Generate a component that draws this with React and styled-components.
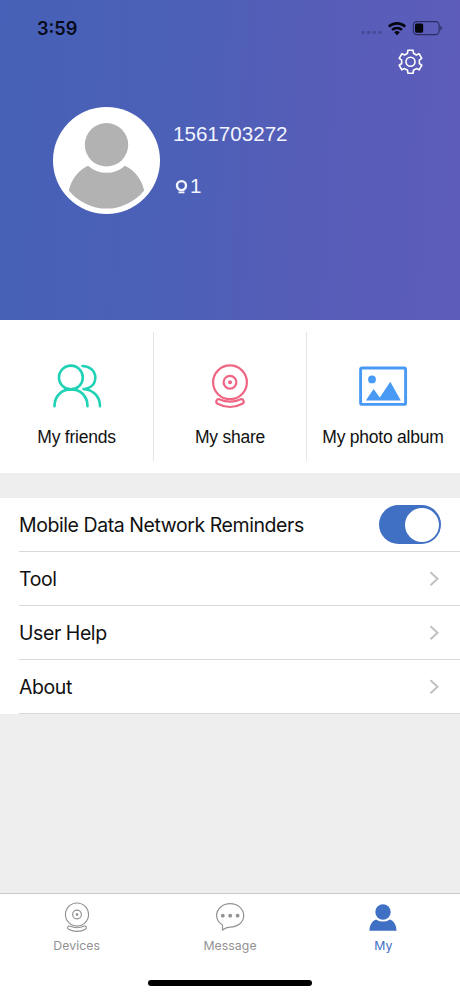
import React, { useState } from "react";
import styled, { createGlobalStyle } from "styled-components";

const GlobalStyle = createGlobalStyle`
    * {
        box-sizing: border-box;
    }
    body {
        margin: 0;
        background: #eeeeee;
    }
`;

const Screen = styled.div`
    display: flex;
    flex-direction: column;
    width: 460px;
    height: 996px;
    background: #eeeeee;
    color: #111111;
    font-family: Inter, "Liberation Sans", sans-serif;
    overflow: hidden;
`;
const Header = styled.header`
    height: 320px;
    background: linear-gradient(93deg, #4661b7 0%, #4c60b7 38%, #555db7 65%, #5e5cbb 100%);
`;
const StatusBar = styled.div`
    display: flex;
    justify-content: space-between;
    height: 48px;
    padding: 0 17px 0 37px;
`;
const Time = styled.span`
    padding-top: 16px;
    font-size: 18.2px;
    line-height: 24px;
    font-weight: 600;
    color: #070b1c;
`;
const StatusIcons = styled.div`
    padding-top: 18px;
    svg {
        display: block;
    }
`;
const SettingsRow = styled.div`
    display: flex;
    justify-content: flex-end;
    height: 59px;
    padding-right: 36px;
`;
const IconButton = styled.button`
    width: 28px;
    height: 28px;
    padding: 0;
    border: 0;
    background: none;
    cursor: pointer;
    svg {
        display: block;
    }
`;
const Profile = styled.div`
    display: flex;
    gap: 13px;
    padding-left: 53px;
`;
const ProfileInfo = styled.div`
    display: flex;
    flex-direction: column;
    gap: 28px;
    padding-top: 15px;
    font-family: "Liberation Sans", Arial, sans-serif;
    font-size: 20.6px;
    line-height: 24px;
    color: #f2f4ff;
`;
const DeviceCount = styled.div`
    display: flex;
    align-items: center;
    gap: 2px;
    padding-left: 2px;
`;

const Tiles = styled.section`
    display: grid;
    grid-template-columns: repeat(3, 153px);
    height: 153px;
    padding: 12px 0;
    background: #ffffff;
`;
const Tile = styled.div`
    display: flex;
    flex-direction: column;
    align-items: center;
    gap: 16px;
    padding-top: 28px;
    font-family: "Liberation Sans", Arial, sans-serif;
    font-size: 17.5px;
    line-height: 22px;
    letter-spacing: -0.23px;
    white-space: nowrap;
    border-left: ${props => (props.$first ? "0" : "1px solid #e6e6e6")};
    svg {
        display: block;
    }
`;

const List = styled.section`
    margin-top: 25px;
    background: #ffffff;
`;
const Row = styled.div`
    display: flex;
    align-items: center;
    justify-content: space-between;
    height: 54px;
    margin-left: 19px;
    padding-right: ${props => (props.$toggle ? "19px" : "20px")};
    font-size: 19.5px;
    letter-spacing: -0.43px;
    border-bottom: 1px solid #d8d8d8;
`;
const Switch = styled.button`
    display: flex;
    justify-content: ${props => (props.$on ? "flex-end" : "flex-start")};
    align-items: center;
    width: 62px;
    height: 39px;
    padding: 0 2px;
    border: 0;
    border-radius: 20px;
    background: ${props => (props.$on ? "#4070c4" : "#e5e5ea")};
    cursor: pointer;
`;
const Knob = styled.span`
    width: 34px;
    height: 34px;
    border-radius: 50%;
    background: #ffffff;
`;

const TabBar = styled.nav`
    display: grid;
    grid-template-columns: repeat(3, 1fr);
    height: 87px;
    margin-top: auto;
    padding-top: 8px;
    background: #ffffff;
    border-top: 1px solid #c9c9c9;
`;
const Tab = styled.div`
    display: flex;
    flex-direction: column;
    align-items: center;
    gap: 4px;
    font-size: 12.3px;
    line-height: 16px;
    letter-spacing: 0.05px;
    color: ${props => (props.$active ? "#4070c4" : "#929292")};
    svg {
        display: block;
    }
`;
const HomeArea = styled.div`
    display: flex;
    justify-content: center;
    height: 16px;
    background: #ffffff;
`;
const HomeIndicator = styled.div`
    width: 164px;
    height: 6px;
    border-radius: 3px;
    background: #000000;
`;

const SystemIcons = () => (
    <svg width="83" height="20" viewBox="0 0 83 20">
        <g fill="#474c98">
            <rect x="1.2" y="13" width="3.6" height="3" rx="1.2" />
            <rect x="6.9" y="13" width="3.6" height="3" rx="1.2" />
            <rect x="12.5" y="13" width="3.6" height="3" rx="1.2" />
            <rect x="18.2" y="13" width="3.6" height="3" rx="1.2" />
        </g>
        <g fill="none" stroke="#05060f" strokeWidth="2.6">
            <path d="M28.8 8.6a12 12 0 0 1 16.4 0" />
            <path d="M32 11.9a7.4 7.4 0 0 1 10 0" />
        </g>
        <path d="M34.2 14.2a4.2 4.2 0 0 1 5.6 0L37 17.2z" fill="#05060f" />
        <rect x="53.3" y="3.6" width="25.8" height="13" rx="3.6" fill="none" stroke="#2b2d63" strokeWidth="1.1" />
        <rect x="55" y="5.5" width="8.2" height="9.2" rx="1.6" fill="#05060f" />
        <path d="M80.4 7.8q1.6.6 1.6 2.3t-1.6 2.3z" fill="#2b2d63" />
    </svg>
);

// six teeth, each one given by [radius, angle from the tooth axis]
const tooth = [[9, -19], [11.8, -13], [11.8, 13], [9, 19]];
const gearPoints = [0, 60, 120, 180, 240, 300].flatMap((turn) =>
    tooth.map(([r, a]) => {
        const angle = ((turn + a - 90) * Math.PI) / 180;
        return `${(14.5 + r * Math.cos(angle)).toFixed(2)},${(13.8 + r * Math.sin(angle)).toFixed(2)}`;
    })
).join(" ");

const GearIcon = () => (
    <svg width="28" height="28" viewBox="0 0 28 28" fill="none" stroke="#ffffff" strokeWidth="1.6" strokeLinejoin="round">
        <polygon points={gearPoints} />
        <circle cx="14.5" cy="13.8" r="4.5" />
    </svg>
);

const Avatar = () => (
    <svg width="107" height="107" viewBox="0 0 107 107">
        <circle cx="53.5" cy="53.5" r="53.5" fill="#ffffff" />
        <circle cx="53.5" cy="37.8" r="21.7" fill="#b2b2b2" />
        <path d="M35 58.7A27.6 27.6 0 0 0 72 58.7C82 63.5 88.5 72 91.2 83.5A48.3 48.3 0 0 1 15.8 83.5C18.5 72 25 63.5 35 58.7z" fill="#b2b2b2" />
    </svg>
);

const BulbIcon = () => (
    <svg width="13" height="16" viewBox="0 0 13 16" fill="none" stroke="#f2f4ff">
        <circle cx="6.5" cy="7.6" r="4.5" strokeWidth="2.4" />
        <path d="M3.5 14.4h6" strokeWidth="1.8" />
    </svg>
);

const FriendsIcon = () => (
    <svg width="50" height="50" viewBox="0 0 50 50" fill="none" stroke="#1fd2b5" strokeWidth="2.6" strokeLinecap="round">
        <circle cx="18.9" cy="17.5" r="11.9" />
        <path d="M2.5 46.3C2.5 36 9.5 29.4 19 29.4S35.5 36 35.5 46.3" />
        <path d="M30.5 6C37.5 6 43.3 11 43.3 17.7S38 29 30.5 29C41 29.5 48 36 48 46.3" />
    </svg>
);

const CameraIcon = ({ size, viewBox, stroke, color }) => (
    <svg width={size} height={size} viewBox={viewBox} fill="none" stroke={color} strokeWidth={stroke}>
        <circle cx="25" cy="22.3" r="16.9" />
        <circle cx="25" cy="22.3" r="6.4" />
        <circle cx="25" cy="22.3" r="2" fill={color} stroke="none" />
        <path d="M14.3 39.2Q25 44 35.7 39.2C38.6 38.8 39.9 42.2 37.3 43.8Q31.5 47 25 47T12.7 43.8C10.1 42.2 11.4 38.8 14.3 39.2z" strokeLinejoin="round" />
    </svg>
);

const AlbumIcon = () => (
    <svg width="50" height="50" viewBox="0 0 50 50">
        <rect x="2.6" y="8" width="45" height="36.4" rx="1.5" fill="none" stroke="#489af5" strokeWidth="2.9" />
        <circle cx="14" cy="19.4" r="3.9" fill="#489af5" />
        <path d="M7.8 40.5l7.8-11.5 6.2 8.6 10.5-15.8 10.5 18.7z" fill="#489af5" />
    </svg>
);

const ChevronIcon = () => (
    <svg width="11" height="16" viewBox="0 0 11 16" fill="none" stroke="#c1c1c4" strokeWidth="2">
        <path d="M1.5 1.2l7 6.5-7 6.5" />
    </svg>
);

const MessageIcon = () => (
    <svg width="32" height="32" viewBox="0 1.3 32 32">
        <path d="M8.5 29.3V24.2C4.6 22 2.6 18.6 2.6 14.9 2.6 8.3 8.6 3 16.2 3S29.7 8.3 29.7 14.9C29.7 21.5 24 26.4 16.2 26.4 13 26.4 11 27.2 8.5 29.3z" fill="none" stroke="#929292" strokeWidth="1.2" strokeLinejoin="round" />
        <g fill="#929292">
            <circle cx="8.8" cy="15" r="1.9" />
            <circle cx="16.2" cy="15" r="1.9" />
            <circle cx="23.6" cy="15" r="1.9" />
        </g>
    </svg>
);

const PersonIcon = () => (
    <svg width="32" height="32" viewBox="0 0 32 32" fill="#4070c4">
        <circle cx="16" cy="10" r="7.7" />
        <path d="M9 17.4Q16 21.8 23 17.4C27.5 19.2 29.5 23.5 29.5 28.7H2.5C2.5 23.5 4.5 19.2 9 17.4z" />
    </svg>
);

const links = ["Tool", "User Help", "About"];

const App = () => {
    const [reminders, setReminders] = useState(true);

    return (
        <>
            <GlobalStyle />
            <Screen>
                <Header>
                    <StatusBar>
                        <Time>3:59</Time>
                        <StatusIcons><SystemIcons /></StatusIcons>
                    </StatusBar>
                    <SettingsRow>
                        <IconButton aria-label="Settings"><GearIcon /></IconButton>
                    </SettingsRow>
                    <Profile>
                        <Avatar />
                        <ProfileInfo>
                            <span>1561703272</span>
                            <DeviceCount>
                                <BulbIcon />
                                <span>1</span>
                            </DeviceCount>
                        </ProfileInfo>
                    </Profile>
                </Header>

                <Tiles>
                    <Tile $first>
                        <FriendsIcon />
                        <span>My friends</span>
                    </Tile>
                    <Tile>
                        <CameraIcon size={50} viewBox="0 0 50 50" stroke={2.2} color="#ef6684" />
                        <span>My share</span>
                    </Tile>
                    <Tile>
                        <AlbumIcon />
                        <span>My photo album</span>
                    </Tile>
                </Tiles>

                <List>
                    <Row $toggle>
                        <span>Mobile Data Network Reminders</span>
                        <Switch $on={reminders} aria-label="Reminders" onClick={() => setReminders(!reminders)}>
                            <Knob />
                        </Switch>
                    </Row>
                    {links.map((name) => (
                        <Row key={name}>
                            <span>{name}</span>
                            <ChevronIcon />
                        </Row>
                    ))}
                </List>

                <TabBar>
                    <Tab>
                        <CameraIcon size={32} viewBox="1.6 4 46.8 46.8" stroke={1.7} color="#929292" />
                        <span>Devices</span>
                    </Tab>
                    <Tab>
                        <MessageIcon />
                        <span>Message</span>
                    </Tab>
                    <Tab $active>
                        <PersonIcon />
                        <span>My</span>
                    </Tab>
                </TabBar>
                <HomeArea>
                    <HomeIndicator />
                </HomeArea>
            </Screen>
        </>
    );
};

export default App;
